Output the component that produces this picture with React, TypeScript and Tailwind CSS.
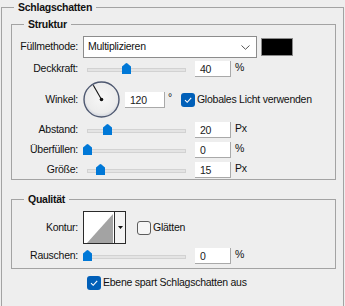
import React from 'react'

const Slider = ({ pos }: { pos: number }) => (
    <div className="relative h-[16px] w-[107px] shrink-0">
        <div className="absolute left-[4px] right-[4px] top-[7px] h-[4px] border border-[#d2d2d2] bg-[#e4e4e4]" />
        <svg className="absolute top-[2px]" style={{ left: pos }} width="9" height="11" viewBox="0 0 9 11">
            <path d="M3.6 0.4 Q4.5 -0.2 5.4 0.4 L9 3.6 V11 H0 V3.6 Z" fill="#0078d7" />
        </svg>
    </div>
)

const Field = ({ value, wide }: { value: string; wide?: boolean }) => (
    <div className={`${wide ? 'w-[40px]' : 'w-[36px]'} h-[16px] shrink-0 bg-white border-b border-r border-[#a9a9a9] pl-[5px] leading-[16px] text-[#1a1a1a]`}>
        {value}
    </div>
)

const Label = ({ children }: { children: React.ReactNode }) => (
    <div className="w-[67px] shrink-0 text-right pr-[1px]">{children}</div>
)

const Check = ({ checked }: { checked?: boolean }) =>
    checked ? (
        <div className="w-[14px] h-[14px] shrink-0 rounded-[3px] bg-[#005fb8] flex items-center justify-center">
            <svg width="10" height="10" viewBox="0 0 10 10">
                <path d="M2 5.2 L4.2 7.3 L8.2 2.8" fill="none" stroke="white" strokeWidth="1.1" />
            </svg>
        </div>
    ) : (
        <div className="w-[14px] h-[14px] shrink-0 rounded-[3px] border border-[#5c5c5c] bg-[#f6f6f6]" />
    )

const SliderRow = ({ label, pos, value, unit }: { label: string; pos: number; value: string; unit: string }) => (
    <div className="flex items-center h-[16px] gap-[4px]">
        <Label>{label}</Label>
        <Slider pos={pos} />
        <div className="ml-[1px]">
            <Field value={value} />
        </div>
        <div className="self-start -mt-[1px] leading-[14px]">{unit}</div>
    </div>
)

const Dial = () => (
    <svg width="37" height="37" viewBox="0 0 37 37" className="shrink-0">
        <defs>
            <radialGradient id="dialFill" cx="50%" cy="45%" r="55%">
                <stop offset="0%" stopColor="#f7f7f7" />
                <stop offset="80%" stopColor="#ececec" />
                <stop offset="100%" stopColor="#cfd3dc" />
            </radialGradient>
        </defs>
        <circle cx="18.5" cy="18.5" r="17.5" fill="url(#dialFill)" stroke="#4e5870" strokeWidth="1.4" />
        <line x1="18.5" y1="18.5" x2="10.3" y2="4.3" stroke="#111" strokeWidth="1.1" />
        <circle cx="18.5" cy="18.5" r="1.8" fill="#111" />
    </svg>
)

const Contour = () => (
    <div className="flex w-[43px] h-[33px] shrink-0 border border-[#2a2a2a] bg-white">
        <svg width="30" height="31" viewBox="0 0 30 31" className="shrink-0">
            <polygon points="3,31 29,2 29,31" fill="#a3a3a3" />
        </svg>
        <div className="flex-1 border-l border-[#2a2a2a] bg-[#f4f4f4] flex items-center justify-center">
            <svg width="5" height="3" viewBox="0 0 5 3">
                <polygon points="0,0 5,0 2.5,3" fill="#111" />
            </svg>
        </div>
    </div>
)

export default function App() {
    return (
        <div className="w-[345px] h-[306px] overflow-hidden bg-[#eeeeee] text-[10.5px] tracking-[-0.25px] text-[#111] font-['Liberation_Sans',Arial,sans-serif]">
            <fieldset className="ml-[1px] w-[343px] h-[330px] border border-b-0 border-[#a3a3a3]">
                <legend className="ml-[12px] px-[4px] font-bold leading-[14px]">Schlagschatten</legend>

                <fieldset className="mt-[3px] ml-[9px] w-[325px] border border-[#a3a3a3] pb-[1px]">
                    <legend className="ml-[12px] px-[4px] font-bold leading-[14px]">Struktur</legend>

                    <div className="flex items-center mt-[5px] h-[22px] gap-[4px]">
                        <Label>Füllmethode:</Label>
                        <div className="w-[174px] h-[22px] shrink-0 bg-white border border-[#8c8c8c] flex items-center justify-between pl-[4px] pr-[6px]">
                            <span>Multiplizieren</span>
                            <svg width="9" height="5" viewBox="0 0 9 5">
                                <path d="M0.5 0.5 L4.5 4.3 L8.5 0.5" fill="none" stroke="#555" strokeWidth="1" />
                            </svg>
                        </div>
                        <div className="w-[32px] h-[18px] shrink-0 border border-[#8a8a8a] bg-black" />
                    </div>

                    <div className="mt-[3px]">
                        <SliderRow label="Deckkraft:" pos={39} value="40" unit="%" />
                    </div>

                    <div className="flex items-center mt-[4px] h-[37px] gap-[4px]">
                        <Label>Winkel:</Label>
                        <Dial />
                        <div className="ml-[1px]">
                            <Field value="120" wide />
                        </div>
                        <div className="self-start mt-[9px] -ml-[1px] leading-[14px]">°</div>
                        <div className="ml-[5px]">
                            <Check checked />
                        </div>
                        <span className="-ml-[2px]">Globales Licht verwenden</span>
                    </div>

                    <div className="mt-[4px] flex flex-col gap-[4px]">
                        <SliderRow label="Abstand:" pos={20} value="20" unit="Px" />
                        <SliderRow label="Überfüllen:" pos={0} value="0" unit="%" />
                        <SliderRow label="Größe:" pos={13} value="15" unit="Px" />
                    </div>
                </fieldset>

                <fieldset className="mt-[12px] ml-[9px] w-[325px] border border-[#a3a3a3] pb-[4px]">
                    <legend className="ml-[12px] px-[4px] font-bold leading-[14px]">Qualität</legend>

                    <div className="flex items-center mt-[5px] h-[33px] gap-[4px]">
                        <Label>Kontur:</Label>
                        <Contour />
                        <div className="ml-[7px]">
                            <Check />
                        </div>
                        <span className="-ml-[2px]">Glätten</span>
                    </div>

                    <div className="mt-[4px]">
                        <SliderRow label="Rauschen:" pos={0} value="0" unit="%" />
                    </div>
                </fieldset>

                <div className="flex items-center gap-[2px] mt-[7px] ml-[85px] h-[14px]">
                    <Check checked />
                    <span>Ebene spart Schlagschatten aus</span>
                </div>
            </fieldset>
        </div>
    )
}
